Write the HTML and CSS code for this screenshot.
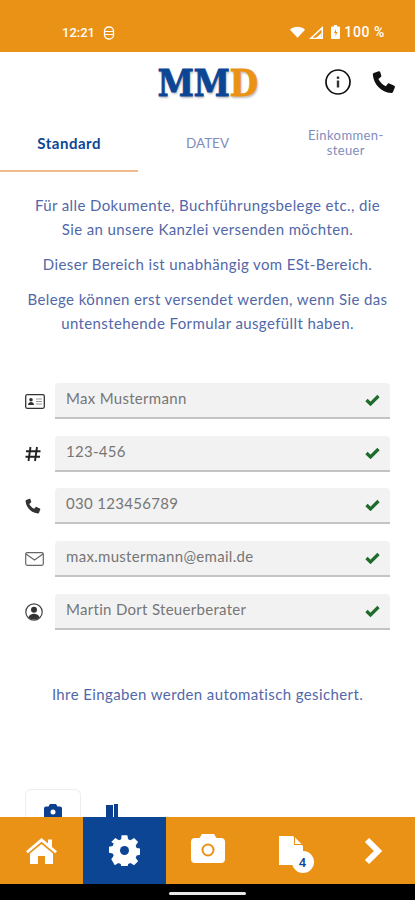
FILE: index.html
```html
<!DOCTYPE html>
<html lang="de">
  <head>
    <meta charset="UTF-8" />
    <title>MMD</title>
    <link rel="stylesheet" href="styles.css">
  </head>
  <body>
    <div class="page">
      <div class="statusbar">
        <div class="status-left">
          <span>12:21</span>
          <svg width="12" height="14" viewBox="0 0 12 14"><rect x="1.500" y="1" width="9" height="12" rx="4" fill="none" stroke="#fff" stroke-width="1.300"/><path d="M2 5.500h8M2 8.500h8" stroke="#fff" stroke-width="1.200"/></svg>
        </div>
        <div class="status-right">
          <svg width="15" height="12" viewBox="0 0 16 12"><path d="M0 3.500C4.500-.5 11.500-.5 16 3.500L8 12z" fill="#fff"/></svg>
          <svg class="signal" width="14" height="13" viewBox="0 0 14 13"><path d="M14 0v13H0zM12.500 3.500 3.500 11.700h9z" fill="#fff" fill-rule="evenodd"/><path d="M12.500 7v5H7z" fill="#fff"/></svg>
          <svg class="battery" width="9" height="14" viewBox="0 0 9 14"><path d="M3 0h3v1.500h2a1 1 0 0 1 1 1V13a1 1 0 0 1-1 1H1a1 1 0 0 1-1-1V2.500a1 1 0 0 1 1-1h2z" fill="#fff"/><path d="M5 4 3 8h1.500v3L6.500 7H5z" fill="#ea9216"/></svg>
          <span class="battery-text">100 %</span>
        </div>
      </div>

      <div class="header">
        <div></div>
        <div class="logo"><span class="logo-blue">MM</span><span class="logo-orange">D</span></div>
        <div class="header-icons">
          <svg width="26" height="26" viewBox="0 0 26 26"><circle cx="13" cy="13" r="12" fill="none" stroke="#111" stroke-width="1.700"/><rect x="11.800" y="11.500" width="2.400" height="7" fill="#333"/><rect x="11.800" y="7.500" width="2.400" height="2.400" fill="#333"/></svg>
          <svg width="24" height="24" viewBox="0 0 24 24"><path d="M6.600 1.200 1.800 2.900C1 3.300.8 4 .9 5c.8 9.500 8.500 17.400 18.100 18.100 1 .1 1.700-.3 2-1.100l1.900-4.800c.2-.6 0-1.200-.6-1.500l-5-2.300c-.5-.2-1.100-.1-1.500.4l-2 2.500c-3.200-1.600-5.800-4.200-7.400-7.400l2.500-2c.5-.4.600-1 .4-1.500L8.100 1.800c-.3-.6-.9-.8-1.500-.6z" fill="#111"/></svg>
        </div>
      </div>

      <div class="tabs">
        <div class="tab tab-active">Standard</div>
        <div class="tab">DATEV</div>
        <div class="tab tab-small">Einkommen-<br>steuer</div>
      </div>

      <div class="content">
        <div class="intro">
          <p>Für alle Dokumente, Buchführungsbelege etc., die Sie an unsere Kanzlei versenden möchten.</p>
          <p>Dieser Bereich ist unabhängig vom ESt-Bereich.</p>
          <p>Belege können erst versendet werden, wenn Sie das untenstehende Formular ausgefüllt haben.</p>
        </div>

        <div class="form">
          <div class="row">
            <svg class="row-icon" width="20" height="15" viewBox="0 0 20 15"><rect x=".7" y=".7" width="18.600" height="13.600" rx="1.500" fill="none" stroke="#333" stroke-width="1.300"/><circle cx="6" cy="5.800" r="1.800" fill="#333"/><path d="M3 11c0-4 6-4 6 0z" fill="#333"/><path d="M11 5h6M11 7.500h6M11 10h6" stroke="#999"/></svg>
            <div class="field"><span>Max Mustermann</span><svg class="check" width="15" height="12" viewBox="0 0 15 12"><path d="M1.500 6 5.500 10 13.500 2" fill="none" stroke="#1f6b2c" stroke-width="3.200"/></svg></div>
          </div>
          <div class="row">
            <svg class="row-icon" width="16" height="16" viewBox="0 0 16 16"><path d="M5.500 1 3.500 15M12 1l-2 14M1 5.300h14.500M.5 10.700H15" stroke="#222" stroke-width="1.900" fill="none"/></svg>
            <div class="field"><span>123-456</span><svg class="check" width="15" height="12" viewBox="0 0 15 12"><path d="M1.500 6 5.500 10 13.500 2" fill="none" stroke="#1f6b2c" stroke-width="3.200"/></svg></div>
          </div>
          <div class="row">
            <svg class="row-icon" width="16" height="16" viewBox="0 0 24 24"><path d="M6.600 1.200 1.800 2.900C1 3.300.8 4 .9 5c.8 9.500 8.500 17.400 18.100 18.100 1 .1 1.700-.3 2-1.100l1.900-4.800c.2-.6 0-1.200-.6-1.500l-5-2.300c-.5-.2-1.100-.1-1.500.4l-2 2.500c-3.200-1.600-5.800-4.200-7.400-7.400l2.500-2c.5-.4.600-1 .4-1.500L8.100 1.800c-.3-.6-.9-.8-1.500-.6z" fill="#333"/></svg>
            <div class="field"><span>030 123456789</span><svg class="check" width="15" height="12" viewBox="0 0 15 12"><path d="M1.500 6 5.500 10 13.500 2" fill="none" stroke="#1f6b2c" stroke-width="3.200"/></svg></div>
          </div>
          <div class="row">
            <svg class="row-icon" width="19" height="14" viewBox="0 0 19 14"><rect x=".7" y=".7" width="17.600" height="12.600" rx="1.500" fill="none" stroke="#666" stroke-width="1.200"/><path d="M1 2l8.500 6L18 2" fill="none" stroke="#666" stroke-width="1.200"/></svg>
            <div class="field"><span>max.mustermann@email.de</span><svg class="check" width="15" height="12" viewBox="0 0 15 12"><path d="M1.500 6 5.500 10 13.500 2" fill="none" stroke="#1f6b2c" stroke-width="3.200"/></svg></div>
          </div>
          <div class="row">
            <svg class="row-icon" width="18" height="18" viewBox="0 0 18 18"><circle cx="9" cy="9" r="8.200" fill="none" stroke="#444" stroke-width="1.200"/><circle cx="9" cy="6.800" r="3" fill="#333"/><path d="M3.500 14.500c1-5 10-5 11 0-3 2.500-8 2.500-11 0z" fill="#333"/></svg>
            <div class="field"><span>Martin Dort Steuerberater</span><svg class="check" width="15" height="12" viewBox="0 0 15 12"><path d="M1.500 6 5.500 10 13.500 2" fill="none" stroke="#1f6b2c" stroke-width="3.200"/></svg></div>
          </div>
        </div>

        <p class="saved">Ihre Eingaben werden automatisch gesichert.</p>

        <div class="uploads">
          <div class="upload upload-active">
            <svg width="18" height="15" viewBox="0 0 18 15"><path d="M6 0h6l1.500 2.500H16a2 2 0 0 1 2 2V15H0V4.500a2 2 0 0 1 2-2h2.500z" fill="#0d3f8f"/><circle cx="9" cy="8" r="2.500" fill="#fff"/></svg>
          </div>
          <div class="upload">
            <svg width="12" height="15" viewBox="0 0 12 15"><path d="M0 1h7v14H0zM8 0h4v15H8z" fill="#0d3f8f"/></svg>
          </div>
        </div>
      </div>

      <div class="bottomnav">
        <div class="nav-item">
          <svg width="31" height="26" viewBox="0 0 31 26"><path d="M15.500 0 22 5.500V1.500h4v7.500l5 4.300-1.800 2L15.500 3.700 1.800 15.300 0 13.300z" fill="#fff"/><path d="M15.500 6 27 15.500V26h-8v-8h-7v8H4V15.500z" fill="#fff"/></svg>
        </div>
        <div class="nav-item nav-active">
          <svg width="31" height="31" viewBox="0 0 31 31"><path d="M12.500 0h6l.8 4.300 2.500 1 3.600-2.500 4.200 4.200-2.500 3.600 1 2.500 4.400.9v6l-4.400.8-1 2.500 2.500 3.600-4.200 4.200-3.600-2.500-2.500 1-.8 4.400h-6l-.8-4.400-2.500-1-3.600 2.500L1.900 24.900l2.500-3.600-1-2.500L-.900 18v-6l4.300-.9 1-2.500L1.900 7l4.200-4.200 3.600 2.500 2.500-1z" fill="#fff" transform="translate(.4 .2) scale(.97)"/><circle cx="15.500" cy="15.500" r="4.500" fill="#0d4595"/></svg>
        </div>
        <div class="nav-item">
          <svg class="camera" width="34" height="29" viewBox="0 0 34 29"><path d="M11 0h12l2.500 4H30a4 4 0 0 1 4 4v17a4 4 0 0 1-4 4H4a4 4 0 0 1-4-4V8a4 4 0 0 1 4-4h4.500z" fill="#fff"/><circle cx="17" cy="16" r="5.500" fill="none" stroke="#ea9216" stroke-width="2"/></svg>
        </div>
        <div class="nav-item">
          <div class="doc">
            <svg width="24" height="29" viewBox="0 0 24 29"><path d="M0 0h14l10 10v19H0z" fill="#fff"/><path d="M15 0v9h9z" fill="#ea9216"/><path d="M16 1.500 22.500 8H16z" fill="#fff"/></svg>
            <span class="badge">4</span>
          </div>
        </div>
        <div class="nav-item">
          <svg width="19" height="28" viewBox="0 0 19 28"><path d="M3 3 14 14 3 25" fill="none" stroke="#fff" stroke-width="6"/></svg>
        </div>
      </div>

      <div class="navbar"><div class="home-pill"></div></div>
    </div>
  </body>
</html>
```

FILE: styles.css
```css
* {
  box-sizing: border-box;
}

body {
  margin: 0;
  font-family: Lato, "Open Sans", sans-serif;
  background: #fff;
}

.page {
  width: 415px;
  height: 900px;
  display: flex;
  flex-direction: column;
  overflow: hidden;
}

/* status bar */
.statusbar {
  height: 52px;
  flex: none;
  background: #ea9216;
  color: #fff;
  font-family: Roboto, sans-serif;
  font-size: 13px;
  font-weight: 500;
  display: flex;
  justify-content: space-between;
  align-items: flex-end;
  padding: 0 30px 12px 62px;
}

.status-left,
.status-right {
  display: flex;
  align-items: center;
  gap: 8px;
}

.status-right {
  gap: 4px;
}

.status-right .battery {
  margin-left: 4px;
}

.battery-text {
  font-size: 14px;
  letter-spacing: .6px;
}

/* header */
.header {
  height: 63px;
  flex: none;
  display: grid;
  grid-template-columns: 1fr auto 1fr;
  align-items: center;
  padding-bottom: 3px;
}

.logo {
  font-family: "DejaVu Serif", serif;
  font-weight: 700;
  font-size: 33px;
  line-height: 40px;
  letter-spacing: -.5px;
  -webkit-text-stroke: .7px;
  text-shadow: 1px 2px 2px #bbb;
  transform: scaleY(1.15);
  position: relative;
  top: 1px;
}

.logo-blue {
  color: #0d4595;
}

.logo-orange {
  color: #ea9216;
}

.header-icons {
  display: flex;
  align-items: center;
  justify-content: flex-end;
  gap: 21px;
  padding-right: 19px;
}

/* tabs */
.tabs {
  height: 57px;
  flex: none;
  display: flex;
}

.tab {
  flex: 1;
  display: flex;
  align-items: center;
  justify-content: center;
  text-align: center;
  font-size: 13.500px;
  color: #7f8dbd;
  padding-bottom: 1px;
}

.tab-active {
  color: #0d4595;
  font-size: 15px;
  font-weight: 700;
  letter-spacing: .5px;
  border-bottom: 2px solid #f2b98a;
  padding-bottom: 0;
}

.tab-small {
  font-size: 13px;
  line-height: 15px;
  letter-spacing: .4px;
  padding-bottom: 2px;
}

/* content */
.content {
  flex: 1;
  min-height: 0;
  overflow: hidden;
}

.intro {
  padding: 21px 24px 0;
  text-align: center;
  color: #5268a8;
  font-size: 15px;
  letter-spacing: .39px;
  line-height: 24px;
}

.intro p {
  margin: 0 0 11px;
}

.form {
  margin-top: 48px;
  display: flex;
  flex-direction: column;
  gap: 16.700px;
  padding: 0 25px;
}

.row {
  display: flex;
  align-items: center;
}

.row-icon {
  flex: none;
}

.field {
  margin-left: auto;
  width: 335px;
  height: 36px;
  background: #f2f2f2;
  border-bottom: 2px solid #c4c4c4;
  border-radius: 4px 4px 0 0;
  display: flex;
  align-items: center;
  justify-content: space-between;
  padding: 0 10px 0 11px;
  color: #767676;
  font-size: 15px;
  letter-spacing: .3px;
}

.field span {
  margin-bottom: 4px;
}

.saved {
  margin: 55px 0 0;
  text-align: center;
  color: #5268a8;
  font-size: 15px;
  letter-spacing: .39px;
}

.uploads {
  margin-top: 86px;
  padding-left: 25px;
  display: flex;
  gap: 3px;
}

.upload {
  width: 56px;
  height: 60px;
  border: 1px solid transparent;
  border-bottom: 0;
  border-radius: 6px 6px 0 0;
  padding-top: 14px;
  display: flex;
  justify-content: center;
  align-items: flex-start;
}

.upload-active {
  border-color: #eee;
}

/* bottom navigation */
.bottomnav {
  height: 67px;
  flex: none;
  background: #ea9216;
  display: flex;
}

.nav-item {
  flex: 1;
  display: flex;
  align-items: center;
  justify-content: center;
}

.nav-active {
  background: #0d4595;
}

.camera {
  margin-bottom: 5px;
}

.doc {
  position: relative;
  width: 24px;
  height: 29px;
}

.badge {
  position: absolute;
  left: 13px;
  top: 15px;
  width: 22px;
  height: 22px;
  border-radius: 50%;
  background: #fff;
  color: #0d4595;
  font-family: Roboto, sans-serif;
  font-size: 13px;
  font-weight: 500;
  display: flex;
  align-items: center;
  justify-content: center;
}

.navbar {
  height: 16px;
  flex: none;
  background: #000;
  display: flex;
  justify-content: center;
  padding-top: 8px;
}

.home-pill {
  width: 77px;
  height: 3px;
  border-radius: 2px;
  background: #e8e8e8;
}
```
